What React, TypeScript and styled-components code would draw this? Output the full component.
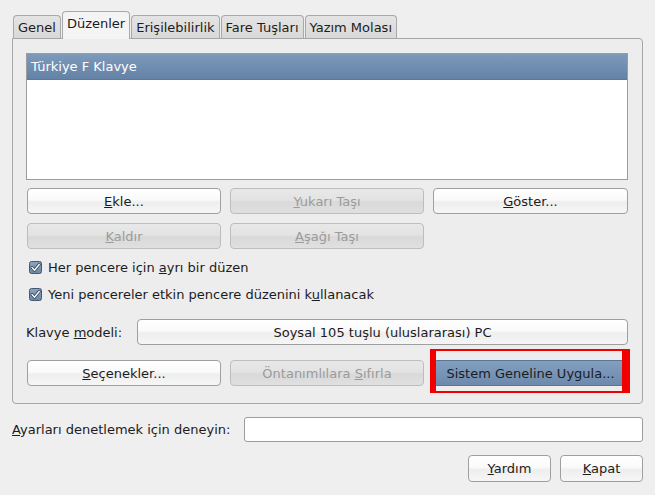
import React, { FC } from "react";
import styled, { createGlobalStyle, css } from "styled-components";

const Global = createGlobalStyle`
  html, body {
    margin: 0;
    background: #efefef;
    font-family: "DejaVu Sans", "Liberation Sans", sans-serif;
    font-size: 13px;
    color: #1c1c1c;
  }
`;

const Win = styled.div`
  width: 655px;
  height: 495px;
  box-sizing: border-box;
  padding: 10px 12px 0 12px;
`;

const TabBar = styled.div`
  display: flex;
  align-items: flex-end;
  height: 28px;
  padding-left: 1px;
  position: relative;
  z-index: 1;
`;

const Tab = styled.div<{ $active?: boolean }>`
  box-sizing: border-box;
  height: 23px;
  padding: 1px 4px 0;
  margin-right: 1px;
  display: flex;
  align-items: center;
  border: 1px solid #a9a9a9;
  border-bottom: none;
  border-radius: 4px 4px 0 0;
  background: linear-gradient(#e4e4e4, #d9d9d9);
  ${(p) =>
    p.$active &&
    css`
      height: 28px;
      margin-bottom: -1px;
      padding-bottom: 5px;
      background: #f4f4f4;
    `}
`;

const Panel = styled.div`
  box-sizing: border-box;
  height: 366px;
  border: 1px solid #a6a6a6;
  border-radius: 0 4px 4px 4px;
  background: #ededed;
  padding: 14px 14px 0 13px;
  display: flex;
  flex-direction: column;
`;

const List = styled.div`
  box-sizing: border-box;
  height: 127px;
  border: 1px solid #9c9c9c;
  background: #fff;
`;

const SelRow = styled.div`
  height: 25px;
  line-height: 25px;
  padding-left: 4px;
  color: #fff;
  background: linear-gradient(#7d9abb, #6482a5);
  border-bottom: 1px solid #5d7a9c;
`;

const Grid = styled.div<{ $top: number }>`
  display: grid;
  grid-template-columns: 194px 194px 195px;
  column-gap: 9px;
  row-gap: 9px;
  padding-left: 1px;
  margin-top: ${(p) => p.$top}px;
`;

const Btn = styled.button<{ $disabled?: boolean; $selected?: boolean }>`
  box-sizing: border-box;
  height: 26px;
  font: inherit;
  color: #1c1c1c;
  border: 1px solid #9f9f9f;
  border-radius: 4px;
  background: linear-gradient(#ffffff 0%, #fafafa 45%, #eeeeee 55%, #f6f6f6 100%);
  padding: 0 8px;
  ${(p) =>
    p.$disabled &&
    css`
      color: #9b9b9b;
      border-color: #bdbdbd;
      background: linear-gradient(#e8e8e8 0%, #e3e3e3 45%, #d9d9d9 55%, #e0e0e0 100%);
    `}
  ${(p) =>
    p.$selected &&
    css`
      border-color: #5b7595;
      background: linear-gradient(#84a0c0 0%, #7894b6 50%, #6d8aad 100%);
    `}
`;

const Highlight = styled.div`
  position: relative;
  display: flex;
  & > button {
    flex: 1;
  }
  &::after {
    content: "";
    position: absolute;
    left: -3px;
    right: -2px;
    top: -11px;
    bottom: -7px;
    border-style: solid;
    border-color: #f20000;
    border-width: 2px 8px 2px 6px;
    pointer-events: none;
  }
`;

const Check = styled.label`
  display: flex;
  align-items: center;
  height: 17px;
  padding-left: 3px;
  gap: 6px;
`;

const Row = styled.div<{ $top: number }>`
  display: flex;
  align-items: center;
  margin-top: ${(p) => p.$top}px;
`;

const Label = styled.span<{ $w?: number }>`
  width: ${(p) => (p.$w ? `${p.$w}px` : "auto")};
  flex-shrink: 0;
`;

const Combo = styled(Btn)`
  flex: 1;
`;

const Entry = styled.div`
  flex: 1;
  box-sizing: border-box;
  height: 25px;
  border: 1px solid #9c9c9c;
  border-radius: 3px;
  background: #fff;
`;

const Actions = styled.div`
  display: flex;
  justify-content: flex-end;
  gap: 9px;
  margin-top: 13px;
`;

const SmallBtn = styled(Btn)`
  width: 83px;
  height: 27px;
`;

const Box: FC = () => (
  <svg width="13" height="13" viewBox="0 0 13 13">
    <defs>
      <linearGradient id="cb" x1="0" y1="0" x2="0" y2="1">
        <stop offset="0" stopColor="#8aa4c2" />
        <stop offset="1" stopColor="#6b87a8" />
      </linearGradient>
    </defs>
    <rect x="0.5" y="0.5" width="12" height="12" rx="2" fill="url(#cb)" stroke="#46586e" />
    <path d="M3 6.5 L5.5 9.2 L10.2 3.4" fill="none" stroke="#2a3442" strokeWidth="3" strokeLinecap="round" strokeLinejoin="round" />
    <path d="M3 6.5 L5.5 9.2 L10.2 3.4" fill="none" stroke="#f4f6f8" strokeWidth="1.6" strokeLinecap="round" strokeLinejoin="round" />
  </svg>
);

const App: FC = () => (
  <Win>
    <Global />
    <TabBar>
      <Tab>Genel</Tab>
      <Tab $active>Düzenler</Tab>
      <Tab>Erişilebilirlik</Tab>
      <Tab>Fare Tuşları</Tab>
      <Tab>Yazım Molası</Tab>
    </TabBar>
    <Panel>
      <List>
        <SelRow>Türkiye F Klavye</SelRow>
      </List>
      <Grid $top={8}>
        <Btn>
          <u>E</u>kle...
        </Btn>
        <Btn $disabled>
          <u>Y</u>ukarı Taşı
        </Btn>
        <Btn>
          <u>G</u>öster...
        </Btn>
        <Btn $disabled>
          <u>K</u>aldır
        </Btn>
        <Btn $disabled>
          <u>A</u>şağı Taşı
        </Btn>
      </Grid>
      <Row $top={10}>
        <Check>
          <Box />
          <span>
            Her pencere için <u>a</u>yrı bir düzen
          </span>
        </Check>
      </Row>
      <Row $top={10}>
        <Check>
          <Box />
          <span>
            Yeni pencereler etkin pencere düzenini k<u>u</u>llanacak
          </span>
        </Check>
      </Row>
      <Row $top={16}>
        <Label $w={111}>
          Klavye <u>m</u>odeli:
        </Label>
        <Combo>Soysal 105 tuşlu (uluslararası) PC</Combo>
      </Row>
      <Grid $top={15}>
        <Btn>
          <u>S</u>eçenekler...
        </Btn>
        <Btn $disabled>
          Öntanımlılara <u>S</u>ıfırla
        </Btn>
        <Highlight>
          <Btn $selected>Sistem Geneline Uygula...</Btn>
        </Highlight>
      </Grid>
    </Panel>
    <Row $top={13}>
      <Label $w={232}>
        <u>A</u>yarları denetlemek için deneyin:
      </Label>
      <Entry />
    </Row>
    <Actions>
      <SmallBtn>
        <u>Y</u>ardım
      </SmallBtn>
      <SmallBtn>
        <u>K</u>apat
      </SmallBtn>
    </Actions>
  </Win>
);

export default App;
